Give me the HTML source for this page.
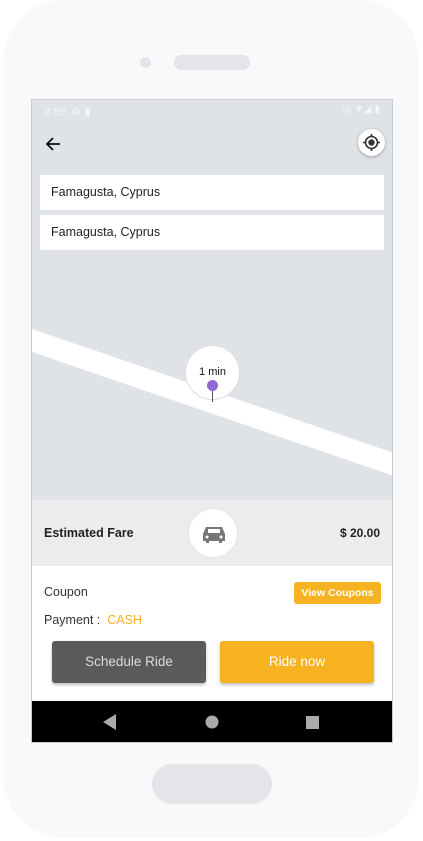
<!DOCTYPE html>
<html><head><style>
*{margin:0;padding:0;box-sizing:border-box}
body{width:423px;height:841px;background:#fff;position:relative;overflow:hidden;font-family:"Liberation Sans",sans-serif}
.phone{position:absolute;left:4px;top:0;width:415px;height:838px;background:#f8f9fb;border-radius:60px}
.abs{position:absolute}
.screen{position:absolute;left:31px;top:99px;width:362px;height:644px;background:#dfe2e6;border:1px solid #c8cacd;overflow:hidden}
.inp{position:absolute;left:8px;width:344px;height:35px;background:#fff;font-size:12.5px;color:#222;padding:10px 0 0 11px}
.btn{position:absolute;top:541px;height:42px;width:154px;border-radius:3px;font-size:13.5px;text-align:center;line-height:42px;box-shadow:0 2px 3px rgba(0,0,0,.25)}
</style></head><body>
<div class="phone"></div>
<div class="abs" style="left:140px;top:57px;width:11px;height:11px;border-radius:50%;background:#e3e5e8"></div>
<div class="abs" style="left:174px;top:55px;width:76px;height:15px;border-radius:8px;background:#e3e5e8"></div>
<div class="abs" style="left:152px;top:764px;width:120px;height:40px;border-radius:20px;background:#e3e5e8"></div>
<div class="screen">
 <svg class="abs" style="left:0;top:0" width="362" height="420"><polygon points="0,229 362,353 362,376 0,252" fill="#fff"/></svg>
 <div class="abs" style="left:12px;top:5px;font-size:11px;color:#f4f5f6">3:59 &nbsp;⚙ ▮</div>
 <div class="abs" style="right:12px;top:4px;font-size:10px;color:#f4f5f6">◎ ▼◢ ▮</div>
 <svg class="abs" style="left:12px;top:35px" width="18" height="18"><path d="M16 9H3M9 3L3 9L9 15" stroke="#111" stroke-width="1.8" fill="none"/></svg>
 <div class="abs" style="left:326px;top:29px;width:27px;height:27px;border-radius:50%;background:#fff;box-shadow:0 1px 3px rgba(0,0,0,.3)"><svg width="27" height="27"><circle cx="13.5" cy="13.5" r="6" stroke="#333" stroke-width="1.6" fill="none"/><circle cx="13.5" cy="13.5" r="3.2" fill="#333"/><path d="M13.5 5v3M13.5 19v3M5 13.5h3M19 13.5h3" stroke="#333" stroke-width="1.6"/></svg></div>
 <div class="inp" style="top:75px">Famagusta, Cyprus</div>
 <div class="inp" style="top:115px">Famagusta, Cyprus</div>
 <div class="abs" style="left:153px;top:245px;width:55px;height:55px;border-radius:50%;background:#fff;border:1px solid #ddd;text-align:center;font-size:11px;padding-top:20px;color:#111">1 min</div>
 <div class="abs" style="left:180px;top:286px;width:1px;height:16px;background:#555"></div>
 <div class="abs" style="left:175px;top:280px;width:11px;height:11px;border-radius:50%;background:#8e6bd1"></div>
 <div class="abs" style="left:0;top:400px;width:362px;height:66px;background:#ececec"></div>
 <div class="abs" style="left:12px;top:426px;font-size:12.5px;font-weight:bold;color:#222">Estimated Fare</div>
 <div class="abs" style="left:156px;top:408px;width:50px;height:50px;border-radius:50%;background:#fff;border:1px solid #e3e3e3"><svg width="50" height="50"><path d="M14 25l3-7h16l3 7v7h-3v2h-3v-2H20v2h-3v-2h-3z" fill="#777"/><rect x="19" y="20" width="12" height="4" fill="#fff"/><circle cx="18" cy="28" r="1.5" fill="#fff"/><circle cx="32" cy="28" r="1.5" fill="#fff"/></svg></div>
 <div class="abs" style="right:12px;top:426px;font-size:12px;font-weight:bold;color:#222">$ 20.00</div>
 <div class="abs" style="left:0;top:466px;width:362px;height:135px;background:#fff"></div>
 <div class="abs" style="left:12px;top:485px;font-size:12.5px;color:#333">Coupon</div>
 <div class="abs" style="left:262px;top:482px;width:87px;height:22px;border-radius:3px;background:#f6b21f;color:#fff;font-size:10.5px;font-weight:bold;text-align:center;line-height:22px">View Coupons</div>
 <div class="abs" style="left:12px;top:513px;font-size:12.5px;color:#333">Payment : &nbsp;<span style="color:#f6b21f">CASH</span></div>
 <div class="btn" style="left:20px;background:#5a5a5a;color:#ddd">Schedule Ride</div>
 <div class="btn" style="left:188px;background:#f6b21f;color:#fff">Ride now</div>
 <div class="abs" style="left:0;top:601px;width:362px;height:43px;background:#000"></div>
 <svg class="abs" style="left:0;top:601px" width="362" height="43"><polygon points="71,21 84,13 84,29" fill="#aaa"/><circle cx="180" cy="21" r="6.5" fill="#aaa"/><rect x="274" y="15" width="13" height="13" fill="#aaa"/></svg>
</div>
</body></html>
